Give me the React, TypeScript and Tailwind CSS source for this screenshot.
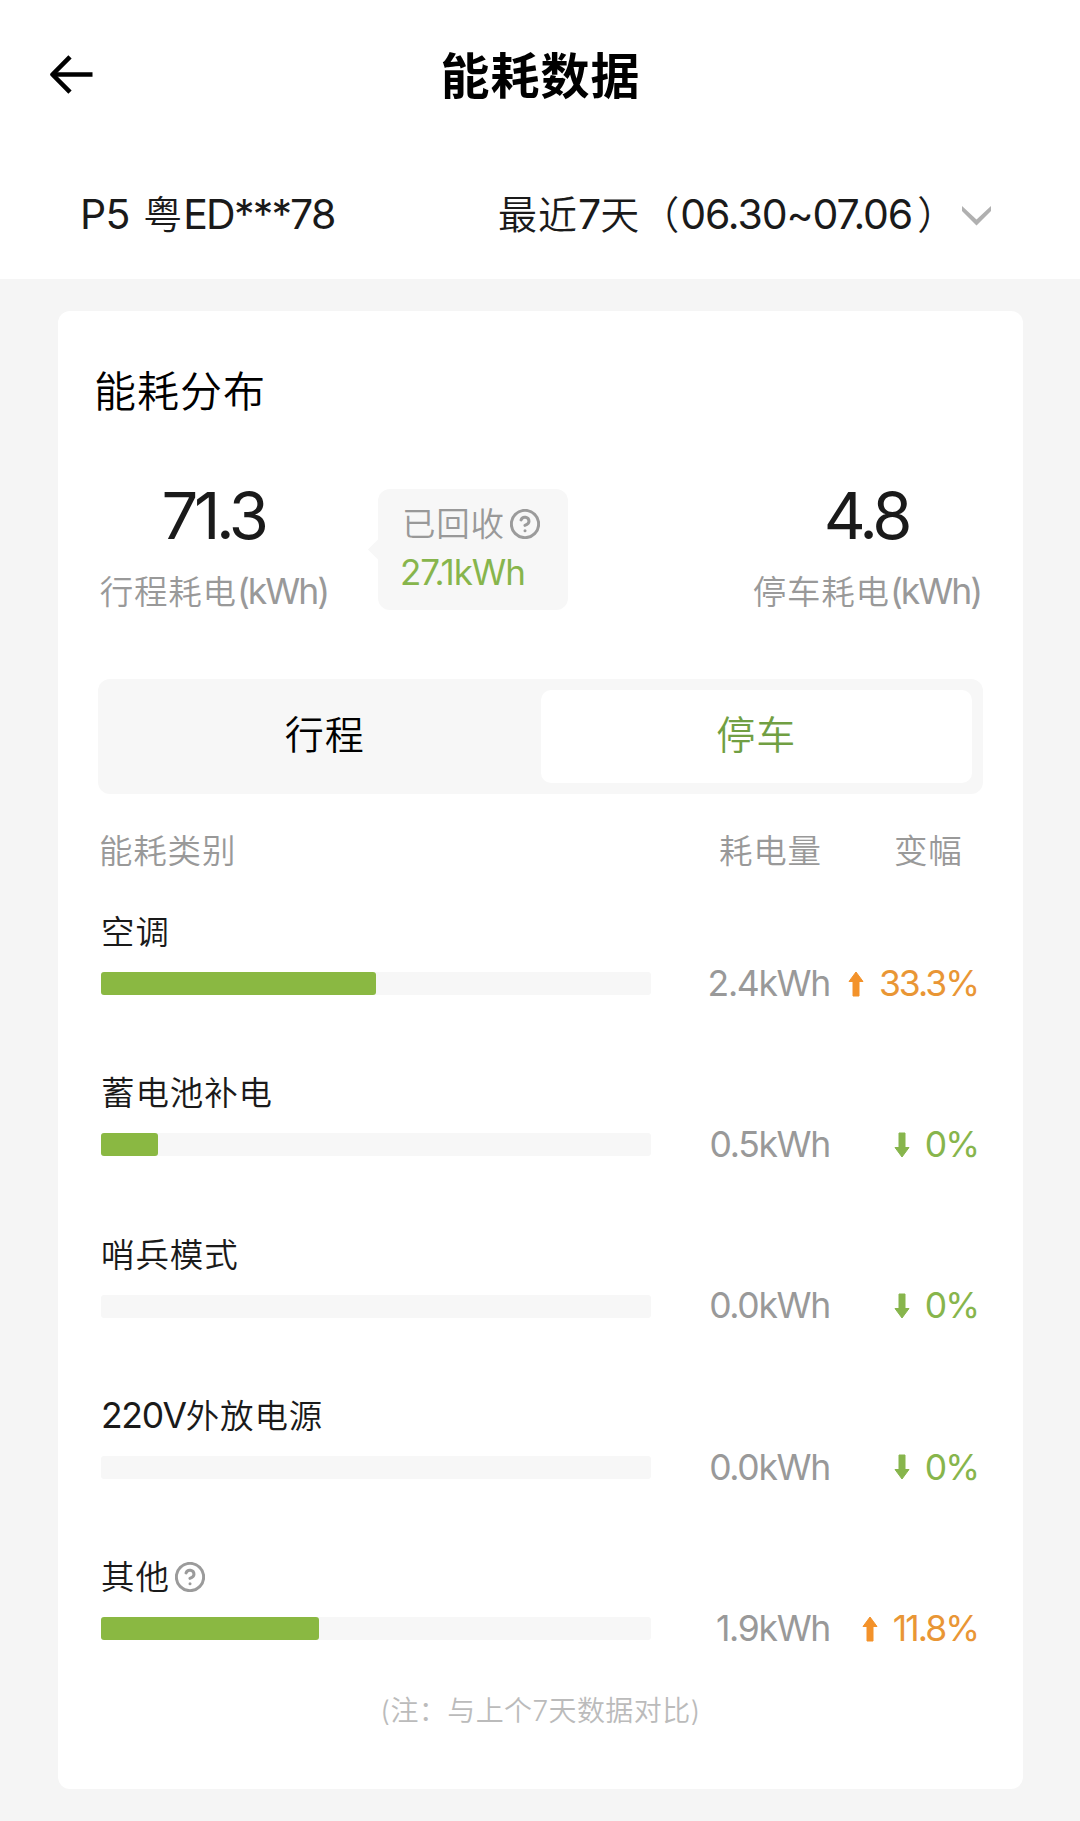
import React, { useState } from 'react';
import { CircleHelp } from 'lucide-react';

const TABS = [
  { id: 'trip', label: '行程' },
  { id: 'parking', label: '停车' }
];

const ITEMS = [
  { id: 'ac', latin: '', name: '空调', value: '2.4kWh', percent: 50, trend: 'up', change: '33.3%', help: false },
  { id: 'battery', latin: '', name: '蓄电池补电', value: '0.5kWh', percent: 10.4, trend: 'down', change: '0%', help: false },
  { id: 'sentry', latin: '', name: '哨兵模式', value: '0.0kWh', percent: 0, trend: 'down', change: '0%', help: false },
  { id: 'v2l', latin: '220V', name: '外放电源', value: '0.0kWh', percent: 0, trend: 'down', change: '0%', help: false },
  { id: 'other', latin: '', name: '其他', value: '1.9kWh', percent: 39.6, trend: 'up', change: '11.8%', help: true }
];

const BackIcon = () => (
  <svg width="43" height="39" viewBox="0 0 43 39" fill="none" stroke="#000" strokeWidth="4.6">
    <path d="M20 1.8 L2.5 19.5 L20 37.2" strokeLinejoin="round" />
    <path d="M2.5 19.5 H42.5" />
  </svg>
);

const ChevronIcon = () => (
  <svg width="31" height="22" viewBox="0 0 31 22" fill="#b0b0b0">
    <path d="M1 1 L15.5 14.5 L30 1 V6 L15.5 20.5 L1 6 Z" />
  </svg>
);

const TrendIcon = ({ up }: { up: boolean }) => (
  <svg
    width="16"
    height="26"
    viewBox="0 0 16 26"
    className={up ? 'text-[#f3922a]' : 'rotate-180 text-[#87b54c]'}
    fill="currentColor"
    stroke="currentColor"
    strokeWidth="1"
    strokeLinejoin="round"
  >
    <path d="M8 1 L15 10.5 H11 V25 H5 V10.5 H1 Z" />
  </svg>
);

const HelpIcon = () => (
  <CircleHelp viewBox="1 1 22 22" className="w-[30px] h-[30px] ml-[5px] text-[#9b9b9b]" strokeWidth={2.2} />
);

const Stat = ({ value, label }: { value: string; label: string }) => (
  <div className="w-[230px] flex flex-col items-center">
    <div className="h-16 leading-16 mr-[2px] text-[65px] tracking-[-4.3px] font-normal text-[#1a1a1a]">{value}</div>
    <div className="mt-[20px] h-12 leading-12 text-[33.5px] tracking-[0.8px] text-[#999] whitespace-nowrap">
      {label}
      <span className="text-[35.5px] tracking-[-2px] font-normal">(kWh)</span>
    </div>
  </div>
);

const App: React.FC = () => {
  const [tab, setTab] = useState('parking');

  return (
    <div className="w-[1080px] min-h-[1821px] bg-[#f5f5f5] font-['Inter','Noto_Sans_CJK_SC',sans-serif] font-[350]">
      {/* Header */}
      <div className="bg-white">
        <div className="h-[150px] grid grid-cols-[1fr_auto_1fr] items-center">
          <button className="pl-[50px] pb-[2px] justify-self-start">
            <BackIcon />
          </button>
          <h1 className="pt-[2px] pl-px text-[49px] leading-none tracking-[1px] font-bold text-black">能耗数据</h1>
        </div>

        <div className="h-[129px] flex items-center pl-[80px] text-[39px] leading-none tracking-[1px] text-[#1a1a1a] whitespace-nowrap">
          <div className="w-[418px]">
            <span className="text-[41px] tracking-[-0.8px] mr-[3px] font-normal">P5 </span>
            粤
            <span className="text-[41px] tracking-[-1.8px] font-normal">ED***78</span>
          </div>
          <div className="flex items-center">
            <div>
              最近<span className="text-[41px] tracking-[-1.1px] font-normal">7</span>天（
              <span className="text-[41px] tracking-[-1.1px] font-normal">06.30~07.06</span>
              <span className="ml-[5px]">）</span>
            </div>
            <div className="ml-1 mt-[3px]">
              <ChevronIcon />
            </div>
          </div>
        </div>
      </div>

      {/* Consumption card */}
      <div className="mt-8 ml-[58px] w-[965px] h-[1478px] bg-white rounded-xl pt-[51px]">
        <h2 className="h-[60px] leading-[60px] pl-9 text-[42px] tracking-[1px] text-black">能耗分布</h2>

        <div className="mt-[62px] px-[41px] h-[131px] flex items-start">
          <Stat value="71.3" label="行程耗电" />
          <div className="relative ml-[49px] mt-[5px] w-[190px] h-[121px] pt-[13px] bg-[#f7f7f7] rounded-xl">
            <div className="absolute -left-[7px] top-[53px] w-[15px] h-[15px] rotate-45 bg-[#f7f7f7]"></div>
            <div className="relative h-11 pl-6 flex items-center text-[33.5px] tracking-[0.8px] text-[#999]">
              已回收
              <HelpIcon />
            </div>
            <div className="relative mt-1 h-11 leading-11 pl-[22px] text-[35px] tracking-[-1.1px] font-normal text-[#87b54c]">27.1kWh</div>
          </div>
          <div className="ml-auto">
            <Stat value="4.8" label="停车耗电" />
          </div>
        </div>

        {/* Tabs */}
        <div className="mt-16 mx-10 h-[115px] p-[11px] flex bg-[#f7f7f7] rounded-xl">
          {TABS.map((t) => (
            <button
              key={t.id}
              onClick={() => setTab(t.id)}
              className={`flex-1 pb-[2px] rounded-[10px] text-[39px] tracking-[1px] ${
                tab === t.id ? 'bg-white text-[#719f43]' : 'text-black'
              }`}
            >
              {t.label}
            </button>
          ))}
        </div>

        {/* Table */}
        <div className="mt-[33px] pl-[41px] h-12 leading-12 flex text-[33.5px] tracking-[0.8px] text-[#999]">
          <div className="w-[620px]">能耗类别</div>
          <div className="w-[175px]">耗电量</div>
          <div>变幅</div>
        </div>

        <div className="mt-[33px] px-[43px] flex flex-col gap-[74.25px]">
          {ITEMS.map((item) => (
            <div key={item.id}>
              <div className="h-12 flex items-center text-[33.5px] leading-12 tracking-[0.9px] text-[#1a1a1a]">
                {item.latin && <span className="text-[35.5px] tracking-[-1.3px] font-normal">{item.latin}</span>}
                {item.name}
                {item.help && <HelpIcon />}
              </div>
              <div className="mt-4 h-[23px] flex items-center text-[35.5px] leading-none tracking-[-1.3px] font-normal">
                <div className="w-[550px] h-[23px] bg-[#f7f7f7] rounded-[3px]">
                  <div className="h-[23px] bg-[#8ab842] rounded-[3px]" style={{ width: `${item.percent}%` }}></div>
                </div>
                <div className="w-[179px] text-right text-[#999]">{item.value}</div>
                <div className="w-[148px] flex items-center justify-end gap-[15px] tracking-[-2px]">
                  <TrendIcon up={item.trend === 'up'} />
                  <span className={item.trend === 'up' ? 'text-[#e99635]' : 'text-[#87b54c]'}>{item.change}</span>
                </div>
              </div>
            </div>
          ))}
        </div>

        <div className="mt-[51px] h-10 leading-10 text-center text-[28px] tracking-[0.4px] text-[#bbb]">(注：与上个7天数据对比)</div>
      </div>
    </div>
  );
};

export default App;
